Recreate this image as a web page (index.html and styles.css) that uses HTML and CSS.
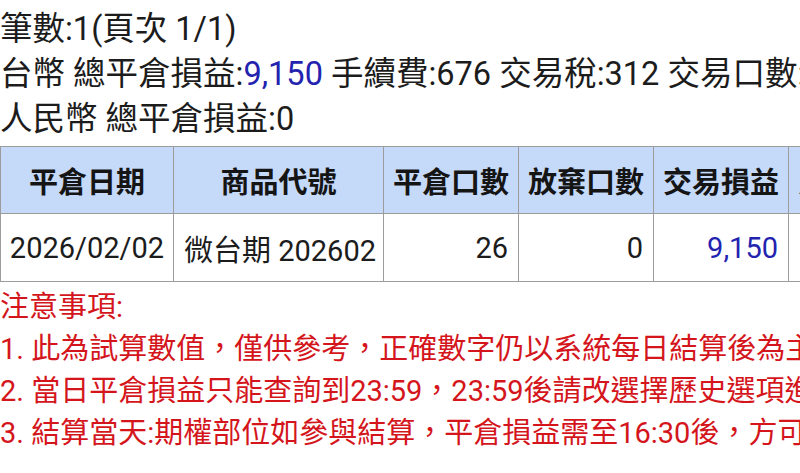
FILE: index.html
```html
<!DOCTYPE html>
<html lang="zh-Hant">
<head>
<meta charset="utf-8">
<link rel="stylesheet" href="styles.css">
</head>
<body>
<div class="summary">
  <div class="line">筆數:1(頁次 1/1)</div>
  <div class="line">台幣 總平倉損益:<span class="blue">9,150</span> 手續費:676 交易稅:312 交易口數:26</div>
  <div class="line">人民幣 總平倉損益:0</div>
</div>
<table class="grid">
  <colgroup>
    <col class="c1"><col class="c2"><col class="c3"><col class="c3"><col class="c3"><col class="c3"><col class="c3">
  </colgroup>
  <thead>
    <tr><th>平倉日期</th><th>商品代號</th><th>平倉口數</th><th>放棄口數</th><th>交易損益</th><th>買進價格</th><th>賣出價格</th></tr>
  </thead>
  <tbody>
    <tr><td>2026/02/02</td><td class="left">微台期 202602</td><td class="num">26</td><td class="num">0</td><td class="num blue">9,150</td><td class="num">31,500</td><td class="num">31,535</td></tr>
  </tbody>
</table>
<div class="notes">
  <div class="line">注意事項:</div>
  <div class="line">1. 此為試算數值，僅供參考，正確數字仍以系統每日結算後為主</div>
  <div class="line">2. 當日平倉損益只能查詢到23:59，23:59後請改選擇歷史選項進行查詢</div>
  <div class="line">3. 結算當天:期權部位如參與結算，平倉損益需至16:30後，方可查詢</div>
</div>
</body>
</html>
```
FILE: styles.css
```css
html, body {
  margin: 0;
  padding: 0;
  overflow: hidden;
  background: #ffffff;
}
body {
  font-family: Roboto, "Noto Sans CJK TC", sans-serif;
  color: #1c1c1c;
  width: 800px;
  height: 473px;
}
.summary {
  padding-top: 7px;
  font-size: 32.5px;
  line-height: 45px;
  white-space: nowrap;
}
.blue { color: #2323b0; }
.grid {
  margin-top: 4px;
  border-collapse: collapse;
  table-layout: fixed;
  width: 1058px;
  font-size: 29px;
}
.c1 { width: 173px; }
.c2 { width: 210px; }
.c3 { width: 135px; }
.grid th, .grid td {
  border: 1px solid #9c9c9c;
  white-space: nowrap;
  overflow: hidden;
}
.grid th {
  background: #c5d9f9;
  font-weight: bold;
  height: 66px;
  padding: 0 4px;
  text-align: center;
  color: #151515;
}
.grid td {
  height: 67px;
  padding: 0 10px;
  text-align: center;
}
.grid td:first-child { padding: 0 4px; }
.grid td.left { text-align: left; }
.grid td.num { text-align: right; }
.notes {
  padding-top: 4px;
  color: #d4161c;
  font-size: 29px;
  line-height: 42px;
  white-space: nowrap;
}
```
